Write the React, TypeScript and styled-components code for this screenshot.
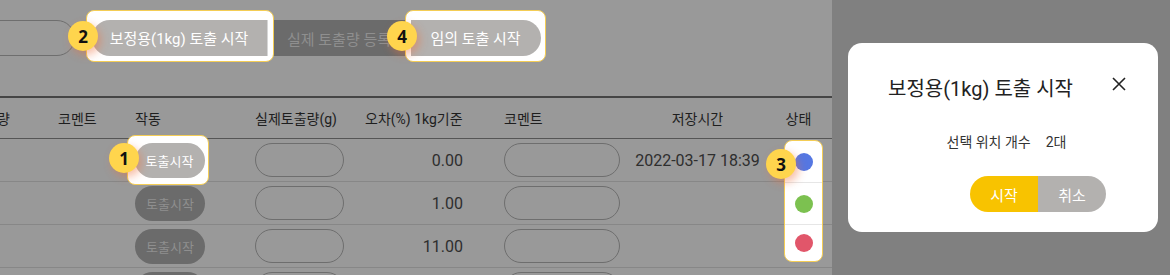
import styled, { createGlobalStyle } from "styled-components";

const GlobalStyle = createGlobalStyle`
  html, body {
    margin: 0;
    padding: 0;
  }
  body {
    font-family: Roboto, "Noto Sans CJK KR", sans-serif;
    background: #999999;
  }
  * {
    box-sizing: border-box;
  }
`;

const Page = styled.div`
  display: flex;
  width: 1170px;
  height: 275px;
  overflow: hidden;
`;

const Main = styled.div`
  width: 832px;
  flex-shrink: 0;
  background: #999999;
  overflow: hidden;
`;

const Toolbar = styled.div`
  display: flex;
  align-items: flex-start;
  height: 96px;
  padding-top: 20px;
`;

const SearchBox = styled.div`
  flex-shrink: 0;
  width: 195px;
  height: 36px;
  margin-left: -120px;
  border: 1px solid #6e6e6e;
  border-radius: 18px;
`;

const Segmented = styled.div`
  display: flex;
  margin-left: 17px;
`;

// white highlight that lifts a control out of the dimmed page
const Spot = styled.div<{ $pad: string; $margin: string }>`
  position: relative;
  z-index: 1;
  display: flex;
  flex-shrink: 0;
  padding: ${(p) => p.$pad};
  margin: ${(p) => p.$margin};
  background: #ffffff;
  border: 1.5px solid #f4cd55;
  border-radius: 8px;
`;

const Badge = styled.span<{ $top?: string }>`
  position: absolute;
  left: -19px;
  top: ${(p) => p.$top ?? "calc(50% - 15px)"};
  width: 30px;
  height: 30px;
  border-radius: 50%;
  background: #ffd54d;
  box-shadow: 3px 4px 8px rgba(238, 112, 64, 0.45);
  display: flex;
  align-items: center;
  justify-content: center;
  font-family: "Noto Sans", Roboto, sans-serif;
  font-weight: 700;
  font-size: 17px;
  color: #111111;
`;

const SegButton = styled.div<{ $tone: "light" | "dark"; $side?: "left" | "right"; $width: number }>`
  display: flex;
  align-items: center;
  justify-content: center;
  width: ${(p) => p.$width}px;
  height: 36px;
  font-size: 15px;
  white-space: nowrap;
  overflow: hidden;
  background: ${(p) => (p.$tone === "light" ? "#b3b1af" : "#6b6b6b")};
  color: ${(p) => (p.$tone === "light" ? "#ffffff" : "#8f8f8f")};
  border-radius: ${(p) =>
    p.$side === "left" ? "18px 0 0 18px" : p.$side === "right" ? "0 18px 18px 0" : "0"};
  border-right: ${(p) => (p.$side === "left" ? "1px solid #d6d6d6" : "none")};
`;

const columns = "90px 80px 115px 120px 135px 140px 135px 67px";

const Table = styled.div`
  margin-left: -50px;
  width: 882px;
`;

const Row = styled.div<{ $head?: boolean }>`
  display: grid;
  grid-template-columns: ${columns};
  align-items: center;
  height: 43px;
  border-top: ${(p) => (p.$head ? "2px solid #454545" : "none")};
  border-bottom: 1px solid ${(p) => (p.$head ? "#555555" : "#878787")};
  color: ${(p) => (p.$head ? "#1e1e1e" : "#2e2e2e")};
  font-size: ${(p) => (p.$head ? "14px" : "16px")};
`;

const Cell = styled.div<{ $align?: "start" | "end" | "center"; $pl?: number; $pr?: number }>`
  position: relative;
  display: flex;
  align-items: center;
  justify-content: ${(p) =>
    p.$align === "end" ? "flex-end" : p.$align === "center" ? "center" : "flex-start"};
  padding-left: ${(p) => p.$pl ?? 0}px;
  padding-right: ${(p) => p.$pr ?? 0}px;
  white-space: nowrap;
`;

const ActionButton = styled.div<{ $active?: boolean }>`
  display: flex;
  align-items: center;
  justify-content: center;
  width: 70px;
  height: 35px;
  border-radius: 18px;
  font-size: 13px;
  background: ${(p) => (p.$active ? "#b3b1af" : "#6b6b6b")};
  color: ${(p) => (p.$active ? "#ffffff" : "#8f8f8f")};
`;

const FieldBox = styled.div<{ $width: number }>`
  width: ${(p) => p.$width}px;
  height: 34px;
  border: 1px solid #6e6e6e;
  border-radius: 17px;
`;

const StatusSpot = styled.div`
  position: absolute;
  top: -20px;
  left: 19px;
  width: 39px;
  height: 122px;
  display: flex;
  flex-direction: column;
  background: #ffffff;
  border: 1.5px solid #f4cd55;
  border-radius: 8px;
`;

const StatusSlot = styled.div`
  display: flex;
  align-items: center;
  justify-content: center;
  height: 42px;
  border-bottom: 1px solid #e6e6e6;
  &:last-of-type {
    flex: 1;
    border-bottom: none;
  }
`;

const Dot = styled.span<{ $color: string }>`
  width: 18px;
  height: 18px;
  border-radius: 50%;
  background: ${(p) => p.$color};
`;

const Side = styled.div`
  flex: 1;
  background: #808080;
  padding: 43px 12px 0 16px;
`;

const Modal = styled.div`
  width: 310px;
  height: 189px;
  background: #ffffff;
  border-radius: 14px;
  padding: 34px 31px 30px 40px;
  color: #222222;
`;

const ModalHead = styled.div`
  display: flex;
  justify-content: space-between;
  align-items: flex-start;
`;

const ModalTitle = styled.h2`
  margin: 0;
  font-size: 20px;
  font-weight: 400;
  line-height: 24px;
`;

const CloseButton = styled.button`
  border: 0;
  padding: 0;
  margin-top: -1px;
  background: none;
  width: 16px;
  height: 16px;
  display: flex;
  cursor: pointer;
`;

const ModalBody = styled.div`
  display: flex;
  justify-content: center;
  gap: 15px;
  margin: 31px 0 0 -2px;
  font-size: 14px;
  line-height: 20px;
  color: #333333;
`;

const ModalActions = styled.div`
  display: flex;
  justify-content: flex-end;
  margin: 24px 21px 0 0;
`;

const ModalButton = styled.button<{ $primary?: boolean }>`
  width: 68px;
  height: 36px;
  border: 0;
  font-family: inherit;
  font-size: 15px;
  color: #ffffff;
  background: ${(p) => (p.$primary ? "#f8c300" : "#b3b1af")};
  border-radius: ${(p) => (p.$primary ? "18px 0 0 18px" : "0 18px 18px 0")};
`;

const rows = [
  { value: "0.00", time: "2022-03-17 18:39" },
  { value: "1.00", time: "" },
  { value: "11.00", time: "" },
  { value: "", time: "" },
];

const statusColors = ["#5577e2", "#7cc150", "#e1566a"];

const App = () => {
  return (
    <Page>
      <GlobalStyle />
      <Main>
        <Toolbar>
          <SearchBox />
          <Segmented>
            <Spot $pad="8.5px 5.5px 4.5px 4.5px" $margin="-10px -7px -6px -6px">
              <SegButton $tone="light" $side="left" $width={176}>
                보정용(1kg) 토출 시작
              </SegButton>
              <Badge>2</Badge>
            </Spot>
            <SegButton $tone="dark" $width={144}>
              실제 토출량 등록
            </SegButton>
            <Spot $pad="8.5px 4.5px 4.5px 4.5px" $margin="-10px -6px -6px -6px">
              <SegButton $tone="light" $side="right" $width={130}>
                임의 토출 시작
              </SegButton>
              <Badge>4</Badge>
            </Spot>
          </Segmented>
        </Toolbar>

        <Table>
          <Row $head>
            <Cell $align="end" $pr={30}>토출량</Cell>
            <Cell $pl={18}>코멘트</Cell>
            <Cell $pl={15}>작동</Cell>
            <Cell $pl={20}>실제토출량(g)</Cell>
            <Cell $pl={10}>오차(%) 1kg기준</Cell>
            <Cell $pl={14}>코멘트</Cell>
            <Cell $align="center">저장시간</Cell>
            <Cell $align="center">상태</Cell>
          </Row>
          {rows.map((row, i) => (
            <Row key={i}>
              <Cell />
              <Cell />
              <Cell $pl={15}>
                {i === 0 ? (
                  <Spot $pad="6.5px 3.5px 6.5px 6.5px" $margin="-8px -5px -8px -8px">
                    <ActionButton $active>토출시작</ActionButton>
                    <Badge $top="calc(50% - 17px)">1</Badge>
                  </Spot>
                ) : (
                  <ActionButton>{i < 3 ? "토출시작" : ""}</ActionButton>
                )}
              </Cell>
              <Cell $pl={20}>
                <FieldBox $width={89} />
              </Cell>
              <Cell $align="end" $pr={27}>
                {row.value}
              </Cell>
              <Cell $pl={14}>
                <FieldBox $width={116} />
              </Cell>
              <Cell $align="center">{row.time}</Cell>
              <Cell>
                {i === 0 && (
                  <StatusSpot>
                    {statusColors.map((c) => (
                      <StatusSlot key={c}>
                        <Dot $color={c} />
                      </StatusSlot>
                    ))}
                    <Badge $top="8px">3</Badge>
                  </StatusSpot>
                )}
              </Cell>
            </Row>
          ))}
        </Table>
      </Main>

      <Side>
        <Modal>
          <ModalHead>
            <ModalTitle>보정용(1kg) 토출 시작</ModalTitle>
            <CloseButton aria-label="닫기">
              <svg width="16" height="16" viewBox="0 0 16 16">
                <path d="M2 2 L14 14 M14 2 L2 14" stroke="#222" strokeWidth="1.6" fill="none" />
              </svg>
            </CloseButton>
          </ModalHead>
          <ModalBody>
            <span>선택 위치 개수</span>
            <span>2대</span>
          </ModalBody>
          <ModalActions>
            <ModalButton $primary>시작</ModalButton>
            <ModalButton>취소</ModalButton>
          </ModalActions>
        </Modal>
      </Side>
    </Page>
  );
};

export default App;
